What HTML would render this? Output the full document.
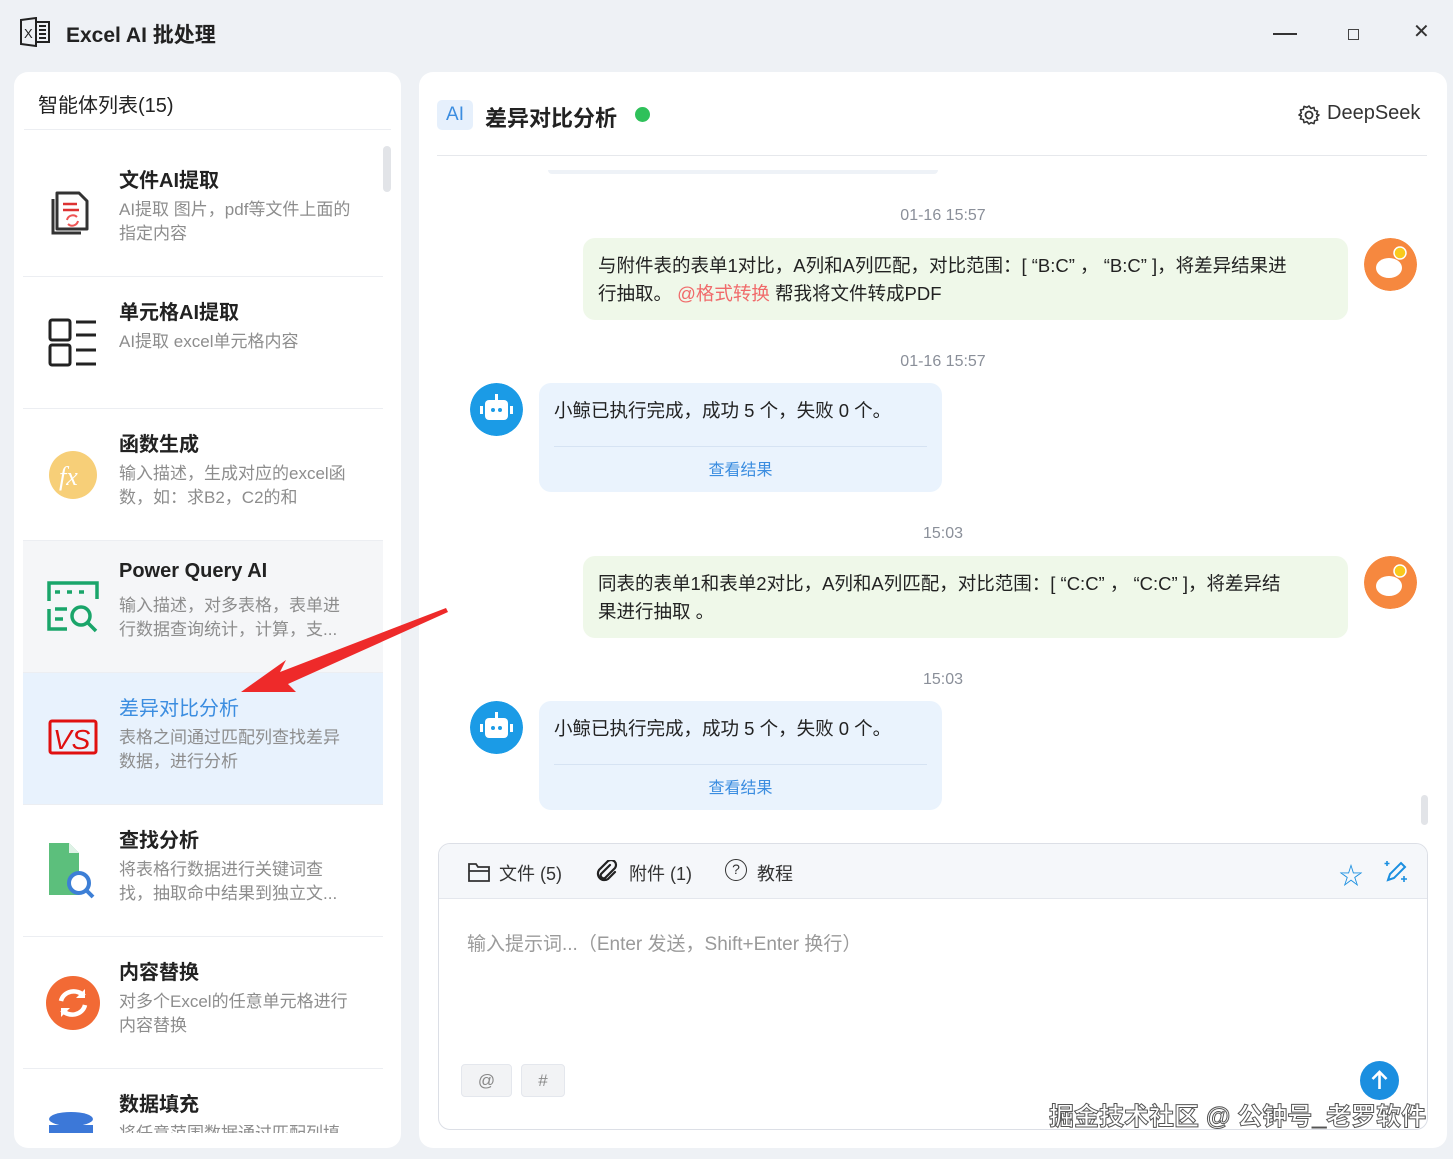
<!DOCTYPE html>
<html><head><meta charset="utf-8"><style>
*{box-sizing:border-box;margin:0;padding:0}
body{width:1453px;height:1159px;background:#eef1f5;font-family:"Liberation Sans","Noto Sans CJK SC",sans-serif;position:relative;overflow:hidden;color:#222}
.abs{position:absolute}
.panel{position:absolute;background:#fff;border-radius:14px}
.item{position:absolute;left:23px;width:360px;height:132px;border-bottom:1px solid #eceef2}
.item .t{position:absolute;left:96px;top:19px;font-size:20px;font-weight:bold;color:#222}
.item .d{position:absolute;left:96px;top:53px;width:233px;font-size:17px;line-height:24px;color:#8d8d8d}
.item svg{position:absolute;left:22px;top:38px}
.ts{position:absolute;width:100%;text-align:center;font-size:16px;color:#8a8f99}
.ub{position:absolute;left:583px;width:765px;height:82px;background:#eff8e9;border-radius:12px;padding:14px 50px 14px 15px;font-size:18.5px;line-height:28px;color:#222}
.bb{position:absolute;left:539px;width:403px;height:109px;background:#eaf3fd;border-radius:12px}
.bb .m{position:absolute;left:15px;top:14px;font-size:18.5px}
.bb .l{position:absolute;left:15px;right:15px;top:63px;border-top:1px solid #d6e3f3}
.bb .v{position:absolute;width:100%;text-align:center;top:73px;font-size:16px;color:#3b8de0}
.av{position:absolute;width:53px;height:53px;border-radius:50%}
</style></head><body>
<svg class="abs" style="left:19px;top:17px" width="32" height="30" viewBox="0 0 32 30"><path d="M2 3 L17 1 V29 L2 27 Z" fill="none" stroke="#222" stroke-width="2"/><text x="5" y="21" font-size="13" font-family="Liberation Sans" fill="#222">X</text><path d="M17 5 H30 V25 H17 M20 9h7M20 13h7M20 17h7M20 21h7" fill="none" stroke="#222" stroke-width="2"/></svg>
<div class="abs" style="left:66px;top:19px;font-size:21px;font-weight:bold;color:#222">Excel AI 批处理</div>
<div class="abs" style="left:1273px;top:33px;width:24px;border-top:2px solid #333"></div>
<div class="abs" style="left:1348px;top:29px;width:11px;height:11px;border:1.5px solid #444"></div>
<div class="abs" style="left:1413px;top:19px;font-size:20px;color:#333">✕</div>

<div class="panel" style="left:14px;top:72px;width:387px;height:1076px;overflow:hidden">
 <div class="abs" style="left:24px;top:17px;font-size:20px;color:#222">智能体列表(15)</div>
 <div class="abs" style="left:10px;right:10px;top:57px;border-top:1px solid #eceef2"></div>
 <div class="abs" style="left:369px;top:74px;width:8px;height:46px;border-radius:4px;background:#e2e4e8"></div>
</div>
<div class="abs" style="left:0;top:0">
 <div class="item" style="top:145px"><svg width="56" height="56" viewBox="0 0 56 56"><path d="M12 10 H34 L42 18 V46 H12 Z" fill="none" stroke="#333" stroke-width="3" stroke-linejoin="round"/><path d="M8 16 V50 H36" fill="none" stroke="#333" stroke-width="3"/><path d="M18 21h14M18 27h16" stroke="#d33" stroke-width="2.5"/><path d="M22 37a6 6 0 0 1 10-3M33 38a6 6 0 0 1-10 3" stroke="#e55" stroke-width="2" fill="none"/></svg><div class="t">文件AI提取</div><div class="d">AI提取 图片，pdf等文件上面的指定内容</div></div>
 <div class="item" style="top:277px"><svg width="56" height="56" viewBox="0 0 56 56"><rect x="5" y="5" width="20" height="20" rx="2" fill="none" stroke="#222" stroke-width="3"/><rect x="5" y="30" width="20" height="20" rx="2" fill="none" stroke="#222" stroke-width="3"/><path d="M31 7h20M31 20h20M31 35h20M31 49h20" stroke="#222" stroke-width="3"/></svg><div class="t">单元格AI提取</div><div class="d">AI提取 excel单元格内容</div></div>
 <div class="item" style="top:409px"><svg width="56" height="56" viewBox="0 0 56 56"><circle cx="28" cy="28" r="24" fill="#f7cf78"/><text x="14" y="38" font-size="26" font-style="italic" fill="#fff" font-family="Liberation Serif">fx</text></svg><div class="t">函数生成</div><div class="d">输入描述，生成对应的excel函数，如：求B2，C2的和</div></div>
 <div class="item" style="top:541px;background:#f5f6f8"><svg width="56" height="56" viewBox="0 0 56 56"><path d="M4 22 V4 H52 V20 M22 50 H4 V30" fill="none" stroke="#1aa56a" stroke-width="3.5"/><path d="M10 13h5M22 13h5M34 13h5M10 30h12M10 40h8" stroke="#1aa56a" stroke-width="3.5"/><circle cx="36" cy="37" r="9" fill="none" stroke="#1aa56a" stroke-width="3.5"/><path d="M43 44l8 8" stroke="#1aa56a" stroke-width="3.5"/></svg><div class="t">Power Query AI</div><div class="d">输入描述，对多表格，表单进行数据查询统计，计算，支...</div></div>
 <div class="item" style="top:673px;background:#e8f2fd"><svg width="56" height="56" viewBox="0 0 56 56"><rect x="5" y="10" width="46" height="32" rx="2" fill="none" stroke="#e01010" stroke-width="3"/><text x="8" y="38" font-size="28" font-style="italic" fill="#e01010" font-family="Liberation Sans">VS</text></svg><div class="t" style="color:#3b8de0;font-weight:normal">差异对比分析</div><div class="d">表格之间通过匹配列查找差异数据，进行分析</div></div>
 <div class="item" style="top:805px"><svg width="56" height="56" viewBox="0 0 56 56"><path d="M4 0 H24 L34 10 V52 H4 Z" fill="#5cbf7c"/><path d="M24 0 V10 H34" fill="#dff2e6"/><circle cx="34" cy="40" r="10" fill="#fff" stroke="#3d7fd6" stroke-width="4"/><path d="M41 47l7 7" stroke="#3d7fd6" stroke-width="4"/></svg><div class="t">查找分析</div><div class="d">将表格行数据进行关键词查找，抽取命中结果到独立文...</div></div>
 <div class="item" style="top:937px"><svg width="56" height="56" viewBox="0 0 56 56"><circle cx="28" cy="28" r="27" fill="#f26a35"/><path d="M16 26a13 12 0 0 1 23-5M40 30a13 12 0 0 1-23 5" stroke="#fff" stroke-width="4.5" fill="none"/><path d="M40 14v9h-9M16 42v-9h9" fill="#fff"/></svg><div class="t">内容替换</div><div class="d">对多个Excel的任意单元格进行内容替换</div></div>
 <div class="item" style="top:1069px;border:none;height:64px;overflow:hidden"><svg width="56" height="56" viewBox="0 0 56 56"><ellipse cx="26" cy="12" rx="22" ry="7" fill="#3c78d8"/><rect x="4" y="18" width="44" height="20" fill="#3c78d8"/></svg><div class="t">数据填充</div><div class="d">将任意范围数据通过匹配列填</div></div>
</div>

<div class="panel" style="left:419px;top:72px;width:1028px;height:1076px"></div>
<div class="abs" style="left:437px;top:100px;width:36px;height:30px;background:#e6f0fc;border-radius:5px;color:#3b8de0;font-size:19px;text-align:center;line-height:30px">AI</div>
<div class="abs" style="left:485px;top:101px;font-size:22px;font-weight:bold">差异对比分析</div>
<div class="abs" style="left:635px;top:107px;width:15px;height:15px;border-radius:50%;background:#2fc15a"></div>
<svg class="abs" style="left:1298px;top:104px" width="22" height="22" viewBox="0 0 22 22"><circle cx="11" cy="11" r="3.5" fill="none" stroke="#333" stroke-width="1.8"/><path d="M11 2l2 2.5 3-1 .6 3 3 .6-1 3L21 11l-2.4 2 1 3-3 .6-.6 3-3-1L11 20l-2-2.4-3 1-.6-3-3-.6 1-3L1 11l2.4-2-1-3 3-.6.6-3 3 1z" fill="none" stroke="#333" stroke-width="1.6" stroke-linejoin="round"/></svg>
<div class="abs" style="left:1327px;top:102px;font-size:20px;color:#333">DeepSeek</div>
<div class="abs" style="left:437px;top:155px;width:990px;border-top:1px solid #e6e8ec"></div>
<div class="abs" style="left:548px;top:170px;width:390px;height:4px;background:#eef2f7;border-radius:0 0 6px 6px"></div>

<div class="abs" style="left:419px;top:0;width:1048px;height:1159px">
 <div class="ts" style="top:207px">01-16 15:57</div>
 <div class="ts" style="top:353px">01-16 15:57</div>
 <div class="ts" style="top:525px">15:03</div>
 <div class="ts" style="top:671px">15:03</div>
</div>
<div class="ub" style="top:238px">与附件表的表单1对比，A列和A列匹配，对比范围：[ “B:C” ，  “B:C” ]，将差异结果进行抽取。 <span style="color:#f06a6a">@格式转换</span> 帮我将文件转成PDF</div>
<div class="ub" style="top:556px">同表的表单1和表单2对比，A列和A列匹配，对比范围：[ “C:C” ，  “C:C” ]，将差异结果进行抽取 。</div>
<div class="bb" style="top:383px"><div class="m">小鲸已执行完成，成功 5 个，失败 0 个。</div><div class="l"></div><div class="v">查看结果</div></div>
<div class="bb" style="top:701px"><div class="m">小鲸已执行完成，成功 5 个，失败 0 个。</div><div class="l"></div><div class="v">查看结果</div></div>
<svg class="av" style="left:1364px;top:238px" viewBox="0 0 53 53"><circle cx="26.5" cy="26.5" r="26.5" fill="#f6883f"/><ellipse cx="25" cy="30" rx="13" ry="10" fill="#fff"/><circle cx="36" cy="15" r="6" fill="#f9c91c" stroke="#fff" stroke-width="1.5"/></svg>
<svg class="av" style="left:1364px;top:556px" viewBox="0 0 53 53"><circle cx="26.5" cy="26.5" r="26.5" fill="#f6883f"/><ellipse cx="25" cy="30" rx="13" ry="10" fill="#fff"/><circle cx="36" cy="15" r="6" fill="#f9c91c" stroke="#fff" stroke-width="1.5"/></svg>
<svg class="av" style="left:470px;top:383px" viewBox="0 0 53 53"><circle cx="26.5" cy="26.5" r="26.5" fill="#1b9be6"/><rect x="15" y="17" width="23" height="20" rx="4" fill="#fff"/><rect x="25" y="11" width="3" height="6" fill="#fff"/><circle cx="23" cy="27" r="2" fill="#1b9be6"/><circle cx="30" cy="27" r="2" fill="#1b9be6"/><rect x="10" y="23" width="3" height="8" fill="#fff"/><rect x="40" y="23" width="3" height="8" fill="#fff"/></svg>
<svg class="av" style="left:470px;top:701px" viewBox="0 0 53 53"><circle cx="26.5" cy="26.5" r="26.5" fill="#1b9be6"/><rect x="15" y="17" width="23" height="20" rx="4" fill="#fff"/><rect x="25" y="11" width="3" height="6" fill="#fff"/><circle cx="23" cy="27" r="2" fill="#1b9be6"/><circle cx="30" cy="27" r="2" fill="#1b9be6"/><rect x="10" y="23" width="3" height="8" fill="#fff"/><rect x="40" y="23" width="3" height="8" fill="#fff"/></svg>
<div class="abs" style="left:1421px;top:795px;width:7px;height:30px;border-radius:4px;background:#e2e4e8"></div>

<div class="abs" style="left:438px;top:843px;width:990px;height:287px;border:1px solid #dcdfe6;border-radius:12px;overflow:hidden;background:#fff">
 <div style="height:55px;background:#f5f7fa;border-bottom:1px solid #e4e7ed;position:relative;font-size:18px;color:#333">
  <svg class="abs" style="left:29px;top:18px" width="22" height="20" viewBox="0 0 22 20"><path d="M1 2h7l2 3h11v14H1z M1 9h20" fill="none" stroke="#333" stroke-width="1.8"/></svg>
  <span class="abs" style="left:60px;top:16px">文件 (5)</span>
  <svg class="abs" style="left:157px;top:16px" width="24" height="22" viewBox="0 0 24 22"><path d="M14 5 L5 14 a3 3 0 0 0 4 4 L19 8 a5 5 0 0 0-7-7 L3 10 a6.5 6.5 0 0 0 9 9 l7-7" fill="none" stroke="#222" stroke-width="2.2" stroke-linecap="round"/></svg>
  <span class="abs" style="left:190px;top:16px">附件 (1)</span>
  <span class="abs" style="left:286px;top:15px;width:22px;height:22px;border:1.8px solid #333;border-radius:50%;font-size:14px;text-align:center;line-height:19px">?</span>
  <span class="abs" style="left:318px;top:16px">教程</span>
  <span class="abs" style="left:900px;top:12px;font-size:24px;color:#1b8fe0">☆</span>
  <svg class="abs" style="left:944px;top:15px" width="26" height="26" viewBox="0 0 26 26"><path d="M5 21l2-6 11-11 4 4-11 11z" fill="none" stroke="#1b8fe0" stroke-width="2"/><path d="M4 2v5M1.5 4.5h5M21 17v6M18 20h6" stroke="#1b8fe0" stroke-width="1.6"/></svg>
 </div>
 <div class="abs" style="left:28px;top:85px;font-size:19px;color:#9a9a9a">输入提示词...（Enter 发送，Shift+Enter 换行）</div>
 <div class="abs" style="left:22px;top:220px;width:51px;height:33px;background:#f2f3f5;border:1px solid #e4e7ed;border-radius:4px;text-align:center;line-height:31px;color:#888;font-size:17px">@</div>
 <div class="abs" style="left:82px;top:220px;width:44px;height:33px;background:#f2f3f5;border:1px solid #e4e7ed;border-radius:4px;text-align:center;line-height:31px;color:#888;font-size:17px">#</div>
 <svg class="abs" style="left:921px;top:217px" width="39" height="39" viewBox="0 0 39 39"><circle cx="19.5" cy="19.5" r="19.5" fill="#1b8fe0"/><path d="M19.5 28V11M12.5 18l7-7 7 7" stroke="#fff" stroke-width="2.6" fill="none"/></svg>
</div>
<div class="abs" style="left:1049px;top:1097px;font-size:25px;color:#fff;-webkit-text-stroke:1px #555;font-weight:bold">掘金技术社区 @ 公钟号_老罗软件</div>

<svg class="abs" style="left:0;top:0" width="1453" height="1159"><path d="M446 608 L280 672 L286 660 L241 692 L296 692 L288 684 L448 612 Z" fill="#ee2a2a"/></svg>
</body></html>
